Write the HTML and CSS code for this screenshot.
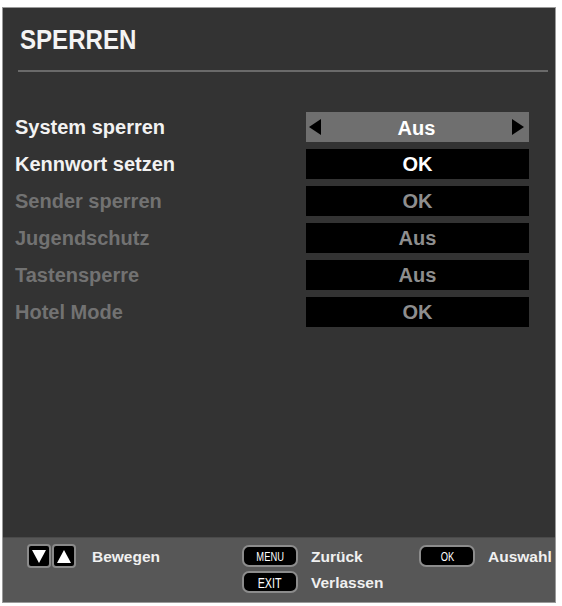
FILE: index.html
```html
<!DOCTYPE html>
<html lang="de">
<head>
<meta charset="utf-8">
<title>Sperren</title>
<link rel="stylesheet" href="styles.css">
</head>
<body>
<div class="panel">
  <h1 class="title"><span class="title-text">SPERREN</span></h1>
  <div class="sep"></div>
  <div class="rows">
    <div class="row">
      <span class="label">System sperren</span>
      <span class="value selected">
        <svg class="tri" width="12" height="16" viewBox="0 0 12 16"><path d="M12 0 L0 8 L12 16 Z"/></svg>
        <span class="vtext">Aus</span>
        <svg class="tri" width="12" height="16" viewBox="0 0 12 16"><path d="M0 0 L12 8 L0 16 Z"/></svg>
      </span>
    </div>
    <div class="row">
      <span class="label">Kennwort setzen</span>
      <span class="value"><span class="vtext">OK</span></span>
    </div>
    <div class="row dim">
      <span class="label">Sender sperren</span>
      <span class="value"><span class="vtext">OK</span></span>
    </div>
    <div class="row dim">
      <span class="label">Jugendschutz</span>
      <span class="value"><span class="vtext">Aus</span></span>
    </div>
    <div class="row dim">
      <span class="label">Tastensperre</span>
      <span class="value"><span class="vtext">Aus</span></span>
    </div>
    <div class="row dim">
      <span class="label">Hotel Mode</span>
      <span class="value"><span class="vtext">OK</span></span>
    </div>
  </div>
  <div class="spacer"></div>
  <div class="footer">
    <div class="fcol">
      <div class="fitem">
        <span class="arrows">
          <span class="akey"><svg width="14" height="13" viewBox="0 0 14 13"><path d="M0 0 H14 L7 13 Z" fill="#fff"/></svg></span>
          <span class="akey"><svg width="14" height="13" viewBox="0 0 14 13"><path d="M0 13 H14 L7 0 Z" fill="#fff"/></svg></span>
        </span>
        <span class="ftext">Bewegen</span>
      </div>
    </div>
    <div class="fcol">
      <div class="fitem"><span class="key"><span class="ktext">MENU</span></span><span class="ftext">Zurück</span></div>
      <div class="fitem"><span class="key"><span class="ktext big">EXIT</span></span><span class="ftext">Verlassen</span></div>
    </div>
    <div class="fcol">
      <div class="fitem"><span class="key"><span class="ktext">OK</span></span><span class="ftext">Auswahl</span></div>
    </div>
  </div>
</div>
</body>
</html>
```
FILE: styles.css
```css
html, body {
  margin: 0;
  padding: 0;
  background: #ffffff;
}
body {
  padding: 7px 0 0 2px;
  font-family: "Liberation Sans", Arial, sans-serif;
}
.panel {
  box-sizing: border-box;
  width: 554px;
  height: 596px;
  border: 1px solid #9a9a9a;
  background: #333333;
  display: flex;
  flex-direction: column;
}
.title {
  margin: 0;
  padding: 16px 0 0 17px;
  height: 32px;
  line-height: 32px;
  font-size: 28px;
  font-weight: bold;
  color: #f4f4f4;
}
.title-text {
  display: inline-block;
  transform: scaleX(0.86);
  transform-origin: left center;
}
.sep {
  height: 2px;
  margin: 14px 7px 0 15px;
  background: #6a6a6a;
}
.rows {
  display: flex;
  flex-direction: column;
  gap: 7px;
  margin-top: 40px;
  padding: 0 26px 0 12px;
}
.row {
  display: flex;
  align-items: center;
  justify-content: space-between;
  height: 30px;
}
.label {
  font-size: 20px;
  font-weight: bold;
  color: #f2f2f2;
  line-height: 30px;
}
.value {
  width: 223px;
  height: 30px;
  background: #000;
  display: flex;
  align-items: center;
  justify-content: center;
  font-size: 20px;
  font-weight: bold;
  color: #ffffff;
}
.value.selected {
  background: #6f6f6f;
  justify-content: space-between;
  padding: 0 5px 0 3px;
  box-sizing: border-box;
}
.value.selected .vtext {
  padding-top: 3px;
}
.tri path { fill: #000; }
.row.dim .label { color: #727272; }
.row.dim .value { color: #8e8e8e; }
.spacer { flex: 1; }
.footer {
  height: 65px;
  box-sizing: border-box;
  background: #575757;
  border-top: 1px solid #4a4a4a;
  padding: 7px 0 0 24px;
  display: grid;
  grid-template-columns: 215px 177px auto;
}
.fcol {
  display: flex;
  flex-direction: column;
  gap: 4px;
}
.fitem {
  display: flex;
  align-items: center;
  gap: 13px;
  height: 22px;
}
.ftext {
  font-size: 15.5px;
  font-weight: bold;
  color: #f0f0f0;
  padding-top: 2px;
}
.arrows {
  display: flex;
  gap: 1px;
  margin-right: 3px;
}
.akey {
  box-sizing: border-box;
  width: 24px;
  height: 24px;
  background: #000;
  border: 2px solid #8a8a8a;
  border-radius: 4px;
  display: flex;
  align-items: center;
  justify-content: center;
}
.key {
  box-sizing: border-box;
  width: 56px;
  height: 22px;
  background: #000;
  border: 2px solid #8c8c8c;
  border-radius: 7px;
  display: flex;
  align-items: center;
  justify-content: center;
  color: #ffffff;
}
.ktext {
  display: inline-block;
  font-size: 13px;
  transform: scaleX(0.72);
}
.ktext.big {
  font-size: 15px;
}
```
